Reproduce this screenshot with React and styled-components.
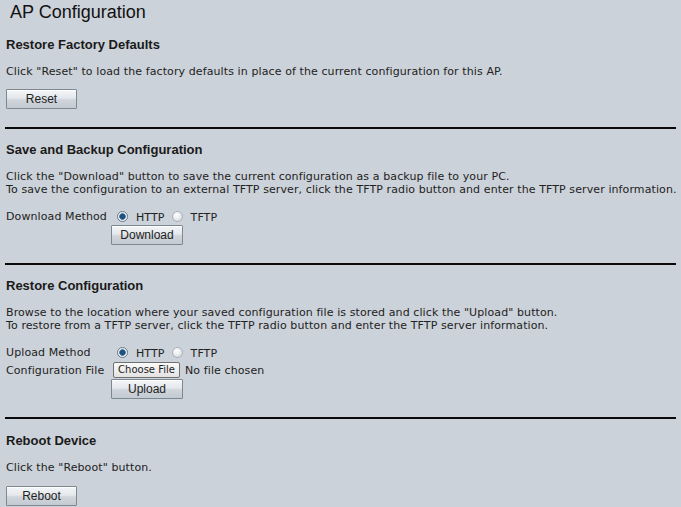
import React from "react";
import styled, { createGlobalStyle } from "styled-components";

const Global = createGlobalStyle`
  html, body { margin: 0; padding: 0; background: #ccd2d9; }
  body { width: 681px; height: 507px; overflow: hidden; }
`;

const Page = styled.div`
  background: #ccd2d9;
  min-height: 507px;
  color: #222;
  font-family: "DejaVu Sans", Verdana, sans-serif;
  letter-spacing: 0.1px;
`;

const Title = styled.h1`
  margin: 0;
  padding: 1px 0 0 10px;
  height: 22px;
  font: 400 18px/22px "Liberation Sans", Arial, sans-serif;
  letter-spacing: 0;
  color: #111;
`;

const Section = styled.section`
  padding: ${(p) => p.$pt || 13}px 5px 0 6px;
`;

const Heading = styled.h2`
  margin: 0;
  font: 700 13px/16px "Liberation Sans", Arial, sans-serif;
  letter-spacing: 0;
  color: #1a1a1a;
`;

const Desc = styled.p`
  margin: 12px 0 0;
  font-size: 11px;
  line-height: 13px;
  color: #222;
  white-space: nowrap;
`;

const Form = styled.div`
  margin-top: 12px;
  display: flex;
  flex-direction: column;
`;

const Row = styled.div`
  display: flex;
  align-items: center;
  min-height: ${(p) => p.$h || 16}px;
  margin-top: ${(p) => p.$mt || 0}px;
`;

const Label = styled.span`
  width: 105px;
  flex: none;
  font-size: 11px;
  line-height: 13px;
`;

const Field = styled.div`
  display: flex;
  align-items: center;
`;

const RadioItem = styled.label`
  display: flex;
  align-items: center;
  font-size: 11px;
  line-height: 13px;
  margin-left: 6px;
  margin-right: 1px;
  & > span:last-child { margin-top: 3px; margin-left: 8px; }
`;

const RadioDot = styled.span`
  width: 11px;
  height: 11px;
  border-radius: 50%;
  box-sizing: border-box;
  flex: none;
  border: 1px solid ${(p) => (p.$on ? "#6d7a86" : "#a9b1b8")};
  background: ${(p) =>
    p.$on
      ? "radial-gradient(circle at 50% 50%, #1e5b8c 0, #174a78 2px, #4d7ea6 3px, #e6eaee 3.6px, #f4f6f8 5px)"
      : "radial-gradient(circle at 40% 35%, #ffffff 0, #eef0f2 3px, #d8dde2 6px)"};
`;

const Button = styled.button`
  display: block;
  box-sizing: border-box;
  width: ${(p) => p.$w || 72}px;
  height: 20px;
  margin: ${(p) => p.$m || 0};
  padding: 0;
  border: 1px solid #7e8891;
  border-radius: 1px;
  background: linear-gradient(#f4f6f8 0%, #e4e8ec 45%, #cfd5db 55%, #c3cad1 100%);
  box-shadow: inset 0 1px 0 #ffffff;
  font: 400 12px/18px "Liberation Sans", Arial, sans-serif;
  color: #222;
`;

const FileButton = styled.button`
  box-sizing: border-box;
  height: 16px;
  width: 67px;
  padding: 0;
  margin-left: 2px;
  border: 1px solid #707070;
  border-radius: 2px;
  background: linear-gradient(#fafafa, #e2e2e2);
  font-family: "DejaVu Sans", Verdana, sans-serif;
  font-size: 10px;
  line-height: 14px;
  color: #222;
  white-space: nowrap;
`;

const FileText = styled.span`
  font-size: 11px;
  line-height: 13px;
  margin-left: 5px;
`;

const Divider = styled.hr`
  margin: ${(p) => p.$mt || 18}px 5px 0 5px;
  border: 0;
  height: 2px;
  background: #0a0a0a;
`;

const Radios = () => (
  <Field>
    <RadioItem>
      <RadioDot $on />
      <span>HTTP</span>
    </RadioItem>
    <RadioItem>
      <RadioDot />
      <span>TFTP</span>
    </RadioItem>
  </Field>
);

export default function App() {
  return (
    <Page>
      <Global />
      <Title>AP Configuration</Title>

      <Section $pt={14}>
        <Heading>Restore Factory Defaults</Heading>
        <Desc>
          Click "Reset" to load the factory defaults in place of the current configuration for this AP.
        </Desc>
        <Button $m="11px 0 0 0" $w={71}>Reset</Button>
      </Section>
      <Divider />

      <Section>
        <Heading>Save and Backup Configuration</Heading>
        <Desc>
          Click the "Download" button to save the current configuration as a backup file to your PC.
          <br />
          To save the configuration to an external TFTP server, click the TFTP radio button and enter the TFTP server information.
        </Desc>
        <Form>
          <Row>
            <Label>Download Method</Label>
            <Radios />
          </Row>
          <Button $m="1px 0 0 105px">Download</Button>
        </Form>
      </Section>
      <Divider />

      <Section>
        <Heading>Restore Configuration</Heading>
        <Desc>
          Browse to the location where your saved configuration file is stored and click the "Upload" button.
          <br />
          To restore from a TFTP server, click the TFTP radio button and enter the TFTP server information.
        </Desc>
        <Form>
          <Row>
            <Label>Upload Method</Label>
            <Radios />
          </Row>
          <Row $h={18} $mt={1}>
            <Label>Configuration File</Label>
            <FileButton>Choose File</FileButton>
            <FileText>No file chosen</FileText>
          </Row>
          <Button $m="0 0 0 105px">Upload</Button>
        </Form>
      </Section>
      <Divider $mt={18} />

      <Section $pt={14}>
        <Heading>Reboot Device</Heading>
        <Desc>Click the "Reboot" button.</Desc>
        <Button $m="12px 0 0 0" $w={71}>Reboot</Button>
      </Section>
    </Page>
  );
}
